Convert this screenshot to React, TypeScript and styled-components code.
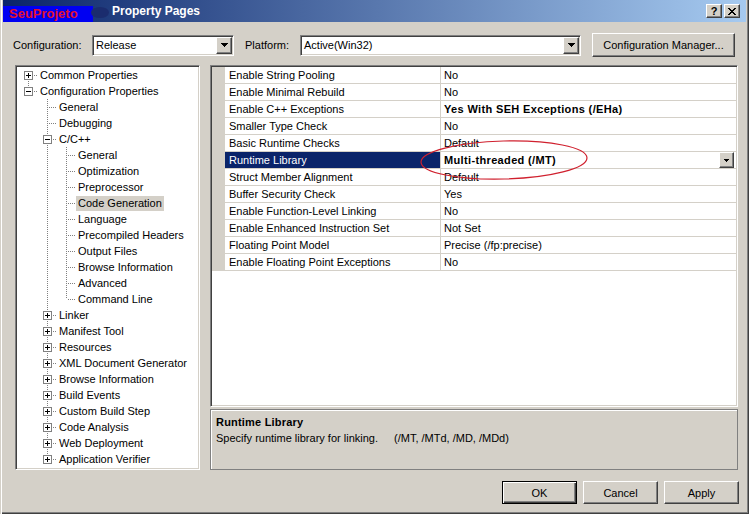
import React from 'react';
import styled, { createGlobalStyle, css } from 'styled-components';

// --- Global ---
const GlobalStyle = createGlobalStyle`
  html, body { margin: 0; padding: 0; background: #D4D0C8; }
  body {
    font-family: "Liberation Sans", Tahoma, Arial, sans-serif;
    font-size: 11px;
    color: #000000;
  }
  * { box-sizing: border-box; }
`;

// --- Bevels (Windows classic) ---
const raised = css`
  border: 1px solid;
  border-color: #ffffff #404040 #404040 #ffffff;
  box-shadow: inset -1px -1px 0 #808080, inset 1px 1px 0 #D4D0C8;
  background: #D4D0C8;
`;

const sunken = css`
  border: 1px solid;
  border-color: #808080 #ffffff #ffffff #808080;
  box-shadow: inset 1px 1px 0 #404040, inset -1px -1px 0 #D4D0C8;
  padding: 1px;
  background: #ffffff;
`;

// --- Window frame ---
const Window = styled.div`
  position: relative;
  width: 749px;
  height: 514px;
  background: #D4D0C8;
  box-shadow: inset 1px 0 0 #D4D0C8, inset 2px 0 0 #ffffff,
    inset -1px -1px 0 #404040, inset -2px -2px 0 #808080;
  overflow: hidden;
  display: flex;
  flex-direction: column;
`;

const TitleBar = styled.div`
  height: 22px;
  margin: 0 3px;
  display: flex;
  align-items: center;
  background: linear-gradient(to right, #0A246A, #A6CAF0);
`;

const Badge = styled.div`
  align-self: flex-end;
  width: 90px;
  height: 16px;
  padding-left: 6px;
  background: #0000F2;
  color: #E5102E;
  font-size: 13px;
  font-weight: bold;
  line-height: 16px;
`;

const Smudge = styled.div`
  width: 18px;
  height: 11px;
  margin-left: -2px;
  margin-top: 2px;
  border-radius: 50%;
  background: #1B2C6E;
`;

const Title = styled.div`
  margin-left: 3px;
  color: #ffffff;
  font-size: 12px;
  font-weight: bold;
`;

const CaptionButtons = styled.div`
  margin-left: auto;
  margin-right: 6px;
  display: flex;
  gap: 2px;
`;

const CaptionButton = styled.div`
  ${raised};
  width: 16px;
  height: 14px;
  display: flex;
  align-items: center;
  justify-content: center;
  font-size: 11px;
  font-weight: bold;
  line-height: 1;
`;

// --- Configuration row ---
const ConfigRow = styled.div`
  margin-top: 11px;
  height: 24px;
  padding-left: 13px;
  display: flex;
  align-items: center;
`;

const Label = styled.div<{ $width: number; $gap?: number }>`
  width: ${p => p.$width}px;
  margin-left: ${p => p.$gap ?? 0}px;
  flex: none;
`;

const Combo = styled.div<{ $width: number }>`
  ${sunken};
  width: ${p => p.$width}px;
  height: 21px;
  display: flex;
  align-items: stretch;
`;

const ComboText = styled.div`
  flex: 1;
  padding-left: 2px;
  line-height: 17px;
`;

const ComboButton = styled.div`
  ${raised};
  width: 16px;
  display: flex;
  align-items: center;
  justify-content: center;
`;

const Button = styled.div<{ $width: number; $default?: boolean; $height?: number; $gap?: number }>`
  ${raised};
  width: ${p => p.$width}px;
  height: ${p => p.$height ?? 23}px;
  margin-left: ${p => p.$gap ?? 0}px;
  display: flex;
  align-items: center;
  justify-content: center;
  flex: none;
  ${p => p.$default && css`
    border: 1px solid #000000;
    box-shadow: inset 1px 1px 0 #ffffff, inset -1px -1px 0 #404040, inset -2px -2px 0 #808080;
  `}
`;

// --- Main area ---
const Main = styled.div`
  margin-top: 8px;
  height: 405px;
  padding-left: 15px;
  display: flex;
  gap: 10px;
`;

const TreePane = styled.div`
  ${sunken};
  width: 185px;
  overflow: hidden;
`;

const TreeList = styled.div`
  padding-left: 2px;
`;

const TreeRow = styled.div`
  height: 16px;
  display: flex;
  align-items: center;
  white-space: nowrap;
`;

const Guide = styled.svg`
  width: 19px;
  height: 16px;
  flex: none;
  display: block;
`;

const TreeLabel = styled.span<{ $selected?: boolean }>`
  height: 15px;
  line-height: 15px;
  padding: 0 2px;
  background: ${p => (p.$selected ? '#D4D0C8' : 'transparent')};
`;

const RightColumn = styled.div`
  width: 528px;
  display: flex;
  flex-direction: column;
  gap: 2px;
`;

const GridPane = styled.div`
  ${sunken};
  height: 342px;
  overflow: hidden;
`;

const PropRow = styled.div`
  display: grid;
  grid-template-columns: 13px 216px 1fr;
  height: 17px;
`;

const Gutter = styled.div`
  background: #D4D0C8;
`;

const NameCell = styled.div<{ $selected?: boolean }>`
  border-bottom: 1px solid #D4D0C8;
  border-right: 1px solid #D4D0C8;
  padding-left: 4px;
  line-height: 16px;
  white-space: nowrap;
  background: ${p => (p.$selected ? '#0A246A' : '#ffffff')};
  color: ${p => (p.$selected ? '#ffffff' : '#000000')};
`;

const ValueCell = styled.div<{ $bold?: boolean }>`
  border-bottom: 1px solid #D4D0C8;
  padding-left: 3px;
  display: flex;
  align-items: center;
  white-space: nowrap;
  font-weight: ${p => (p.$bold ? 'bold' : 'normal')};
  letter-spacing: ${p => (p.$bold ? '0.35px' : 'normal')};
`;

const CellDrop = styled.div`
  ${raised};
  margin-left: auto;
  margin-right: 2px;
  width: 15px;
  height: 16px;
  display: flex;
  align-items: center;
  justify-content: center;
`;

const DescPane = styled.div`
  flex: 1;
  border: 1px solid #808080;
  box-shadow: inset 1px 1px 0 #ffffff;
  padding: 4px 5px;
  line-height: 16px;
`;

const DescTitle = styled.div`
  font-weight: bold;
  letter-spacing: 0.2px;
`;

const Hint = styled.span`
  margin-left: 16px;
`;

const ButtonRow = styled.div`
  margin-top: 11px;
  padding-right: 10px;
  display: flex;
  justify-content: flex-end;
  gap: 6px;
`;

const Scribble = styled.svg`
  position: absolute;
  left: 416px;
  top: 137px;
  width: 178px;
  height: 46px;
  pointer-events: none;
`;

// --- Icons ---
const DownArrow = ({ small }: { small?: boolean }) =>
  small ? (
    <svg width="5" height="3" viewBox="0 0 5 3" shapeRendering="crispEdges">
      <path d="M0 0h5v1h-1v1h-1v1h-1v-1h-1v-1h-1z" fill="#000" />
    </svg>
  ) : (
    <svg width="7" height="4" viewBox="0 0 7 4" shapeRendering="crispEdges">
      <path d="M0 0h7v1h-1v1h-1v1h-1v1h-1v-1h-1v-1h-1v-1h-1z" fill="#000" />
    </svg>
  );

const CloseGlyph = () => (
  <svg width="8" height="7" viewBox="0 0 8 7" shapeRendering="crispEdges">
    <path
      d="M0 0h2v1h1v1h2v-1h1v-1h2v1h-1v1h-1v1h-1v1h1v1h1v1h1v1h-2v-1h-1v-1h-2v1h-1v1h-2v-1h1v-1h1v-1h1v-1h-1v-1h-1v-1h-1z"
      fill="#000"
    />
  </svg>
);

// --- Data ---
type Node = { label: string; children?: Node[]; open?: boolean; selected?: boolean };

const leaf = (label: string, selected = false): Node => ({ label, selected });
const closed = (label: string): Node => ({ label, children: [leaf('x')], open: false });

const tree: Node[] = [
  closed('Common Properties'),
  {
    label: 'Configuration Properties',
    open: true,
    children: [
      leaf('General'),
      leaf('Debugging'),
      {
        label: 'C/C++',
        open: true,
        children: [
          leaf('General'),
          leaf('Optimization'),
          leaf('Preprocessor'),
          leaf('Code Generation', true),
          leaf('Language'),
          leaf('Precompiled Headers'),
          leaf('Output Files'),
          leaf('Browse Information'),
          leaf('Advanced'),
          leaf('Command Line'),
        ],
      },
      closed('Linker'),
      closed('Manifest Tool'),
      closed('Resources'),
      closed('XML Document Generator'),
      closed('Browse Information'),
      closed('Build Events'),
      closed('Custom Build Step'),
      closed('Code Analysis'),
      closed('Web Deployment'),
      closed('Application Verifier'),
    ],
  },
];

type FlatRow = {
  node: Node;
  depth: number;
  isLast: boolean;
  isFirstRoot: boolean;
  ancestorsLast: boolean[];
};

const flatten = (nodes: Node[], depth = 0, ancestorsLast: boolean[] = []): FlatRow[] =>
  nodes.flatMap((node, i) => {
    const isLast = i === nodes.length - 1;
    const row: FlatRow = { node, depth, isLast, isFirstRoot: depth === 0 && i === 0, ancestorsLast };
    const kids = node.open && node.children ? flatten(node.children, depth + 1, [...ancestorsLast, isLast]) : [];
    return [row, ...kids];
  });

const properties: { name: string; value: string; bold?: boolean; selected?: boolean }[] = [
  { name: 'Enable String Pooling', value: 'No' },
  { name: 'Enable Minimal Rebuild', value: 'No' },
  { name: 'Enable C++ Exceptions', value: 'Yes With SEH Exceptions (/EHa)', bold: true },
  { name: 'Smaller Type Check', value: 'No' },
  { name: 'Basic Runtime Checks', value: 'Default' },
  { name: 'Runtime Library', value: 'Multi-threaded (/MT)', bold: true, selected: true },
  { name: 'Struct Member Alignment', value: 'Default' },
  { name: 'Buffer Security Check', value: 'Yes' },
  { name: 'Enable Function-Level Linking', value: 'No' },
  { name: 'Enable Enhanced Instruction Set', value: 'Not Set' },
  { name: 'Floating Point Model', value: 'Precise (/fp:precise)' },
  { name: 'Enable Floating Point Exceptions', value: 'No' },
];

// --- Tree glyphs ---
const dots = { stroke: '#808080', strokeWidth: 1, strokeDasharray: '1 1' };

const PassLine = ({ on }: { on: boolean }) => (
  <Guide viewBox="0 0 19 16">{on && <line x1="9.5" y1="0" x2="9.5" y2="16" {...dots} />}</Guide>
);

const Connector = ({ row }: { row: FlatRow }) => {
  const hasKids = !!row.node.children;
  return (
    <Guide viewBox="0 0 19 16" shapeRendering="crispEdges">
      <line x1="9.5" y1={row.isFirstRoot ? 8 : 0} x2="9.5" y2={row.isLast ? 8 : 16} {...dots} />
      <line x1="11" y1="8.5" x2="19" y2="8.5" {...dots} />
      {hasKids && (
        <>
          <rect x="5.5" y="4.5" width="8" height="8" fill="#fff" stroke="#808080" />
          <line x1="7" y1="8.5" x2="12" y2="8.5" stroke="#000" />
          {!row.node.open && <line x1="9.5" y1="6" x2="9.5" y2="11" stroke="#000" />}
        </>
      )}
    </Guide>
  );
};

const App: React.FC = () => {
  const rows = flatten(tree);
  return (
    <>
      <GlobalStyle />
      <Window>
        <TitleBar>
          <Badge>SeuProjeto</Badge>
          <Smudge />
          <Title>Property Pages</Title>
          <CaptionButtons>
            <CaptionButton>?</CaptionButton>
            <CaptionButton>
              <CloseGlyph />
            </CaptionButton>
          </CaptionButtons>
        </TitleBar>

        <ConfigRow>
          <Label $width={79}>Configuration:</Label>
          <Combo $width={142}>
            <ComboText>Release</ComboText>
            <ComboButton>
              <DownArrow />
            </ComboButton>
          </Combo>
          <Label $width={55} $gap={11}>Platform:</Label>
          <Combo $width={281}>
            <ComboText>Active(Win32)</ComboText>
            <ComboButton>
              <DownArrow />
            </ComboButton>
          </Combo>
          <Button $width={143} $height={24} $gap={11}>Configuration Manager...</Button>
        </ConfigRow>

        <Main>
          <TreePane>
            <TreeList>
              {rows.map((row, i) => (
                <TreeRow key={i}>
                  {row.ancestorsLast.map((last, d) => (
                    <PassLine key={d} on={!last} />
                  ))}
                  <Connector row={row} />
                  <TreeLabel $selected={row.node.selected}>{row.node.label}</TreeLabel>
                </TreeRow>
              ))}
            </TreeList>
          </TreePane>

          <RightColumn>
            <GridPane>
              {properties.map(p => (
                <PropRow key={p.name}>
                  <Gutter />
                  <NameCell $selected={p.selected}>{p.name}</NameCell>
                  <ValueCell $bold={p.bold}>
                    {p.value}
                    {p.selected && (
                      <CellDrop>
                        <DownArrow small />
                      </CellDrop>
                    )}
                  </ValueCell>
                </PropRow>
              ))}
            </GridPane>
            <DescPane>
              <DescTitle>Runtime Library</DescTitle>
              <div>
                Specify runtime library for linking.<Hint>(/MT, /MTd, /MD, /MDd)</Hint>
              </div>
            </DescPane>
          </RightColumn>
        </Main>

        <ButtonRow>
          <Button $width={75} $default>OK</Button>
          <Button $width={75}>Cancel</Button>
          <Button $width={75}>Apply</Button>
        </ButtonRow>

        <Scribble viewBox="0 0 178 46">
          <ellipse
            cx="88"
            cy="23"
            rx="83"
            ry="19"
            fill="none"
            stroke="#D0202E"
            strokeWidth="1.2"
            transform="rotate(-1.5 88 23)"
          />
        </Scribble>
      </Window>
    </>
  );
};

export default App;
